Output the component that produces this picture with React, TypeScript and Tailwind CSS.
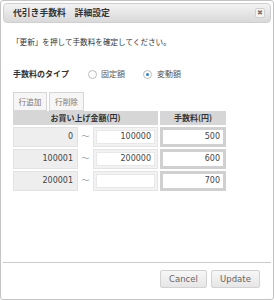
import { useState } from 'react'

const rows = [
  { from: '0', to: '100000', fee: '500' },
  { from: '100001', to: '200000', fee: '600' },
  { from: '200001', to: '', fee: '700' },
]

export default function App() {
  const [type, setType] = useState('variable')

  return (
    <div className="w-[274px] h-[300px] bg-white font-['DejaVu_Sans','Noto_Sans_CJK_JP',sans-serif] text-[#333]">
      <div className="w-full h-full flex flex-col border border-[#c4c4c4] rounded-[3px] p-[2px]">
        <div className="h-[20px] flex items-center justify-between border border-[#cfcfcf] rounded-[4px] bg-gradient-to-b from-[#f3f3f3] to-[#d9d9d9] pl-[9px] pr-[5px]">
          <span className="text-[8.8px] font-bold text-[#333] font-['Noto_Sans_CJK_JP',sans-serif]">代引き手数料　詳細設定</span>
          <button className="w-[10px] h-[10px] flex items-center justify-center border border-[#d0d0d0] rounded-[2px] bg-[#f4f4f4] text-[7px] leading-none text-[#777]">
            ✖
          </button>
        </div>

        <div className="flex-1 flex flex-col px-[9px]">
          <p className="mt-[13px] h-[12px] leading-[12px] text-[7.6px] font-['Noto_Sans_CJK_JP',sans-serif]">
            「更新」を押して手数料を確定してください。
          </p>

          <div className="mt-[20px] h-[12px] flex items-center pl-[1px] text-[8px] font-['Noto_Sans_CJK_JP',sans-serif]">
            <span className="font-bold w-[75px]">手数料のタイプ</span>
            <label className="flex items-center gap-[4px] w-[55px] text-[#555]" onClick={() => setType('fixed')}>
              <span className="w-[9px] h-[9px] rounded-full border border-[#bbb] bg-white flex items-center justify-center">
                {type === 'fixed' && <span className="w-[3px] h-[3px] rounded-full bg-[#2a7fd4]" />}
              </span>
              固定額
            </label>
            <label className="flex items-center gap-[5px] text-[#555]" onClick={() => setType('variable')}>
              <span className="w-[9px] h-[9px] rounded-full border border-[#bbb] bg-white flex items-center justify-center">
                {type === 'variable' && <span className="w-[3px] h-[3px] rounded-full bg-[#2a7fd4]" />}
              </span>
              変動額
            </label>
          </div>

          <div className="mt-[12px] ml-[1px] flex gap-[2px] font-['Noto_Sans_CJK_JP',sans-serif]">
            <button className="w-[34px] h-[19px] border border-[#d6d6d6] bg-[#f6f6f6] text-[7.6px] text-[#777]">行追加</button>
            <button className="w-[35px] h-[19px] border border-[#d6d6d6] bg-[#f6f6f6] text-[7.6px] text-[#777]">行削除</button>
          </div>

          <div className="ml-[1px] grid grid-cols-[65px_15px_65px_68px] gap-y-[2px] text-[8px]">
            <div className="col-span-3 h-[14px] bg-[#d6d6d6] flex items-center justify-center font-bold font-['Noto_Sans_CJK_JP',sans-serif]">
              お買い上げ金額(円)
            </div>
            <div className="ml-[2px] h-[14px] bg-[#d6d6d6] flex items-center justify-center font-bold font-['Noto_Sans_CJK_JP',sans-serif]">
              手数料(円)
            </div>
            {rows.map((r) => (
              <Row key={r.from} {...r} />
            ))}
          </div>
        </div>

        <div className="h-[35px] border-t border-[#cacaca] flex items-start justify-end gap-[4px] pt-[7px] pr-[11px]">
          <button className="w-[47px] h-[18px] border border-[#d2d2d2] rounded-[2px] bg-gradient-to-b from-[#f7f7f7] to-[#e6e6e6] text-[8.5px] text-[#666]">
            Cancel
          </button>
          <button className="w-[49px] h-[18px] border border-[#d2d2d2] rounded-[2px] bg-gradient-to-b from-[#f7f7f7] to-[#e6e6e6] text-[8.5px] text-[#666]">
            Update
          </button>
        </div>
      </div>
    </div>
  )
}

function Row({ from, to, fee }: { from: string; to: string; fee: string }) {
  return (
    <>
      <div className="h-[20px] bg-[#eeeeee] border border-[#e2e2e2] flex items-center justify-end pr-[4px] text-[#444]">
        {from}
      </div>
      <div className="h-[20px] flex items-center justify-center text-[#999] text-[8px]">〜</div>
      <div className="h-[20px] border border-[#e4e4e4] bg-[#f2f2f2] p-[2px]">
        <div className="h-full bg-white border border-[#e8e8e8] flex items-center justify-end pr-[3px] text-[#444]">
          {to}
        </div>
      </div>
      <div className="ml-[2px] h-[20px] bg-[#d0d0d0] p-[3px]">
        <div className="h-full bg-white flex items-center justify-end pr-[3px] text-[#444]">{fee}</div>
      </div>
    </>
  )
}
